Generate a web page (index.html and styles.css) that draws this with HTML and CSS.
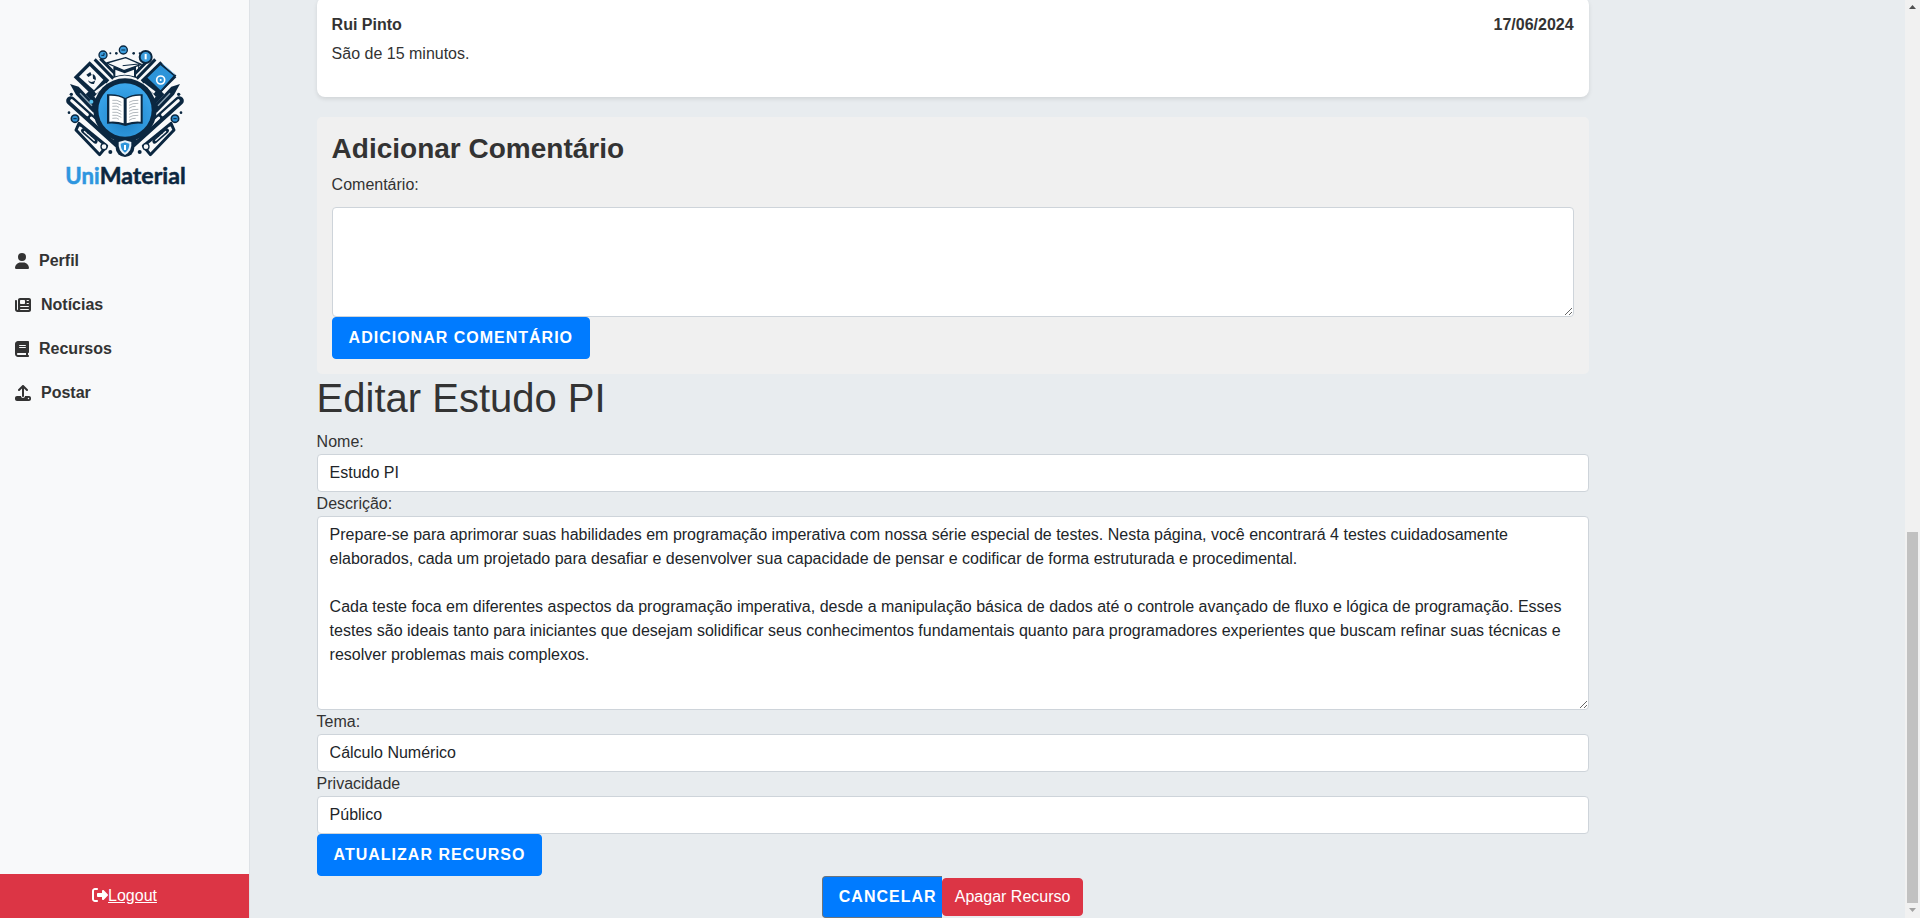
FILE: index.html
```html
<!DOCTYPE html>
<html lang="pt">
<head>
<meta charset="utf-8">
<title>UniMaterial</title>
<link rel="stylesheet" href="styles.css">
</head>
<body>
<aside class="sidebar">
  <svg class="logo" viewBox="0 0 450 495" role="img" aria-label="UniMaterial">
    <defs>
      <radialGradient id="disc" cx=".5" cy=".65" r=".6"><stop offset="0" stop-color="#1b7fc4"/><stop offset="1" stop-color="#3aa5ea"/></radialGradient>
      <g id="side">
        <!-- long pen, ruler and pencil that run down to the shield -->
        <path d="M112 188L152 232" stroke="#0b2740" stroke-width="14"/>
        <path d="M62 212L204 340" stroke="#0b2740" stroke-width="27" stroke-linecap="round"/>
        <path d="M65 212L112 254M124 264L190 324" stroke="#f8f9fa" stroke-width="9" stroke-linecap="round"/>
        <path d="M60 162l26 8 58 62-14 16-52-54z" fill="#0b2740"/>
        <path d="M90 190l36 37" stroke="#8fa5b5" stroke-width="4"/>
        <path d="M87 280L170 348L149 374L78 300z" fill="#f8f9fa" stroke="#0b2740" stroke-width="9" stroke-linejoin="round"/>
        <path d="M100 302l36 32" stroke="#0b2740" stroke-width="14" stroke-linecap="round"/>
        <path d="M102 304l32 28" stroke="#f8f9fa" stroke-width="4"/>
        <path d="M94 283l-5 7M106 292l-6 8M118 302l-6 8M130 312l-6 8M142 322l-6 8" stroke="#0b2740" stroke-width="4"/>
        <path d="M134 88l56 58M151 86l45 46" stroke="#0b2740" stroke-width="9"/>
        <path d="M119 94L178 151L132 201L71 142z" fill="#0b2740"/>
        <path d="M136 188l34-26" stroke="#f8f9fa" stroke-width="8"/>
        <circle cx="75" cy="266" r="11" fill="#2f8fd0" stroke="#0b2740" stroke-width="5"/>
        <path d="M70 266h10" stroke="#0b2740" stroke-width="3"/>
        <g fill="#0b2740"><circle cx="64" cy="193" r="5"/><circle cx="57" cy="248" r="4"/><circle cx="181" cy="366" r="6"/><circle cx="181" cy="70" r="3"/><circle cx="199" cy="70" r="4"/></g>
        <circle cx="162" cy="350" r="9" fill="#f8f9fa" stroke="#0b2740" stroke-width="4"/>
      </g>
    </defs>
    <g fill="none">
      <use href="#side"/>
      <use href="#side" transform="matrix(-1 0 0 1 450 0)"/>
    </g>
    <!-- left sheet -->
    <path d="M119 108L160 149L132 181L87 140z" fill="#f8f9fa"/>
    <path d="M109 134l12-8 4 9-10 6zM128 132q12 5 9 19l-8-5zM114 151q10 10 22 0l-4 11q-13 2-18-11z" fill="#0b2740"/>
    <circle cx="124" cy="215" r="6" fill="#58c1ee"/>
    <!-- right blue book -->
    <path d="M331 101l44 36-43 48-44-42z" fill="#2d94d9" stroke="#0b2740" stroke-width="6"/>
    <path d="M337 101l37 32" stroke="#8fc8ee" stroke-width="3"/>
    <circle cx="332" cy="150" r="12" fill="#2d94d9" stroke="#fff" stroke-width="5"/>
    <circle cx="332" cy="150" r="3" fill="#fff"/>
    <!-- centre disc -->
    <circle cx="225" cy="240" r="95" fill="#0b2740"/>
    <circle cx="225" cy="240" r="80" fill="url(#disc)"/>
    <path d="M171 193q34-3 55 11q22-14 52-11v88q-30-3-52 7q-23-10-55-7z" fill="#0b2740"/>
    <path d="M178 197q28-1 43 9v74q-18-7-43-5zM230 206q18-10 42-9v78q-22-2-42 5z" fill="#fff"/>
    <g fill="none" stroke="#8d969d" stroke-width="2"><path d="M187 211q14-3 27 6M187 220q14-3 27 6M187 229q14-3 20 3M187 238q14-3 27 6M187 247q14-3 27 6M187 256q14-3 27 6M187 265q14-3 20 3"/><path d="M237 217q10-7 28-6M237 226q10-7 28-6M237 235q10-7 20-6M237 244q10-7 28-6M237 253q10-7 28-6M237 262q10-7 28-6M237 271q10-7 20-6"/></g>
    <!-- graduation cap -->
    <path d="M190 110h68v34q-34-15-68 0z" fill="#0b2740"/>
    <path d="M196 119l28 11 28-11v20q-28-10-56 0z" fill="#f8f9fa"/>
    <path d="M170 99L227 83L274 103L222 122z" fill="#f8f9fa" stroke="#0b2740" stroke-width="4" stroke-linejoin="round"/>
    <path d="M218 107l48-5v22" fill="none" stroke="#0b2740" stroke-width="3"/>
    <!-- badges -->
    <g fill="#3b9ddd" stroke="#0b2740" stroke-width="4"><circle cx="159" cy="75" r="12"/><circle cx="220" cy="60" r="12"/><circle cx="287" cy="81" r="18" stroke-width="6"/></g>
    <path d="M154 76h8v-7M214 60h12" fill="none" stroke="#0b2740" stroke-width="3"/>
    <path d="M287 72v16" stroke="#fff" stroke-width="6"/>
    <!-- shield -->
    <circle cx="225" cy="353" r="28" fill="#0b2740"/>
    <path d="M206 336l19-5 19 5q3 27-19 39q-22-12-19-39z" fill="#e9f3fa"/>
    <path d="M212 341l13-4 13 4q1 17-13 27q-14-10-13-27z" fill="#3095da"/>
    <path d="M225 345v15" stroke="#fff" stroke-width="6"/>
    <text class="logo-text" y="461"><tspan x="46" fill="#2e96df" stroke="#2e96df" textLength="103" lengthAdjust="spacingAndGlyphs">Uni</tspan><tspan x="149" fill="#0b2740" stroke="#0b2740" textLength="258" lengthAdjust="spacingAndGlyphs">Material</tspan></text>
  </svg>
  <nav class="menu">
    <a class="menu-item"><svg class="icon icon-narrow" viewBox="0 0 448 512"><path d="M224 256A128 128 0 1 0 224 0a128 128 0 1 0 0 256zm-45.700 48C79.800 304 0 383.800 0 482.300C0 498.700 13.300 512 29.700 512H418.300c16.400 0 29.700-13.300 29.700-29.700C448 383.800 368.200 304 269.700 304H178.300z"/></svg>Perfil</a>
    <a class="menu-item"><svg class="icon" viewBox="0 0 512 512"><path d="M96 96c0-35.300 28.700-64 64-64H448c35.300 0 64 28.700 64 64V416c0 35.300-28.700 64-64 64H80c-44.200 0-80-35.800-80-80V128c0-17.700 14.300-32 32-32s32 14.300 32 32V400c0 8.800 7.200 16 16 16s16-7.200 16-16V96zm64 24v80c0 13.300 10.700 24 24 24H296c13.300 0 24-10.700 24-24V120c0-13.300-10.700-24-24-24H184c-13.300 0-24 10.700-24 24zm208-8c0 8.800 7.200 16 16 16h48c8.800 0 16-7.200 16-16s-7.200-16-16-16H384c-8.800 0-16 7.200-16 16zm0 96c0 8.800 7.200 16 16 16h48c8.800 0 16-7.200 16-16s-7.200-16-16-16H384c-8.800 0-16 7.200-16 16zM160 304c0 8.800 7.200 16 16 16H432c8.800 0 16-7.200 16-16s-7.200-16-16-16H176c-8.800 0-16 7.200-16 16zm0 96c0 8.800 7.200 16 16 16H432c8.800 0 16-7.200 16-16s-7.200-16-16-16H176c-8.800 0-16 7.200-16 16z"/></svg>Notícias</a>
    <a class="menu-item"><svg class="icon icon-narrow" viewBox="0 0 448 512"><path d="M96 0C43 0 0 43 0 96V416c0 53 43 96 96 96H384h32c17.700 0 32-14.300 32-32s-14.300-32-32-32V384c17.700 0 32-14.300 32-32V32c0-17.700-14.300-32-32-32H384 96zm0 384H352v64H96c-17.700 0-32-14.300-32-32s14.300-32 32-32zm32-240c0-8.800 7.200-16 16-16H336c8.800 0 16 7.200 16 16s-7.200 16-16 16H144c-8.800 0-16-7.200-16-16zm16 48H336c8.800 0 16 7.200 16 16s-7.200 16-16 16H144c-8.800 0-16-7.200-16-16s7.200-16 16-16z"/></svg>Recursos</a>
    <a class="menu-item"><svg class="icon" viewBox="0 0 512 512"><path d="M288 109.300V352c0 17.700-14.300 32-32 32s-32-14.300-32-32V109.300l-73.400 73.400c-12.500 12.500-32.800 12.500-45.300 0s-12.500-32.800 0-45.300l128-128c12.500-12.500 32.800-12.500 45.300 0l128 128c12.500 12.500 12.500 32.800 0 45.300s-32.800 12.500-45.300 0L288 109.300zM64 352H192c0 35.300 28.700 64 64 64s64-28.700 64-64H448c35.300 0 64 28.700 64 64v32c0 35.300-28.700 64-64 64H64c-35.300 0-64-28.700-64-64V416c0-35.300 28.700-64 64-64zM432 456a24 24 0 1 0 0-48 24 24 0 1 0 0 48z"/></svg>Postar</a>
  </nav>
  <div class="logout"><svg class="icon" viewBox="0 0 512 512"><path d="M377.900 105.900L500.700 228.700c7.200 7.200 11.300 17.100 11.300 27.300s-4.100 20.100-11.300 27.300L377.900 406.100c-6.400 6.400-15 9.900-24 9.900c-18.700 0-33.900-15.200-33.900-33.900l0-62.100-128 0c-17.700 0-32-14.300-32-32l0-64c0-17.700 14.300-32 32-32l128 0 0-62.100c0-18.700 15.200-33.900 33.900-33.900c9 0 17.600 3.600 24 9.900zM160 96L96 96c-17.700 0-32 14.300-32 32l0 256c0 17.700 14.300 32 32 32l64 0c17.700 0 32 14.300 32 32s-14.300 32-32 32l-64 0c-53 0-96-43-96-96L0 128C0 75 43 32 96 32l64 0c17.700 0 32 14.300 32 32s-14.300 32-32 32z"/></svg><a class="logout-link">Logout</a></div>
</aside>
<main class="content">
  <article class="comment">
    <header class="comment-head"><strong>Rui Pinto</strong><strong>17/06/2024</strong></header>
    <p class="comment-text">São de 15 minutos.</p>
  </article>
  <section class="add-comment">
    <h2 class="add-title">Adicionar Comentário</h2>
    <label class="add-label" for="comentario">Comentário:</label>
    <textarea class="field field-comment" id="comentario"></textarea>
    <button class="btn">Adicionar Comentário</button>
  </section>
  <h1 class="edit-title">Editar Estudo PI</h1>
  <form class="edit-form">
    <label for="nome">Nome:</label>
    <input class="field" id="nome" value="Estudo PI">
    <label for="descricao">Descrição:</label>
    <textarea class="field field-description" id="descricao">Prepare-se para aprimorar suas habilidades em programação imperativa com nossa série especial de testes. Nesta página, você encontrará 4 testes cuidadosamente elaborados, cada um projetado para desafiar e desenvolver sua capacidade de pensar e codificar de forma estruturada e procedimental.

Cada teste foca em diferentes aspectos da programação imperativa, desde a manipulação básica de dados até o controle avançado de fluxo e lógica de programação. Esses testes são ideais tanto para iniciantes que desejam solidificar seus conhecimentos fundamentais quanto para programadores experientes que buscam refinar suas técnicas e resolver problemas mais complexos.</textarea>
    <label for="tema">Tema:</label>
    <input class="field" id="tema" value="Cálculo Numérico">
    <label for="privacidade">Privacidade</label>
    <input class="field" id="privacidade" value="Público">
    <button class="btn" type="button">Atualizar Recurso</button>
  </form>
  <div class="actions"><button class="btn btn-cancel">Cancelar</button><button class="btn-delete">Apagar Recurso</button></div>
</main>
<div class="scrollbar">
  <svg class="arrow" viewBox="0 0 15 15"><path d="M4 9h7L7.500 5z" fill="#505050"/></svg>
  <div class="thumb"></div>
  <svg class="arrow" viewBox="0 0 15 15"><path d="M4 5h7L7.500 9z" fill="#a3a3a3"/></svg>
</div>
</body>
</html>
```
FILE: styles.css
```css
* { box-sizing: border-box; }
body {
  margin: 0;
  height: 918px;
  display: flex;
  overflow: hidden;
  background: #e8ecef;
  color: #333;
  font: 16px/24px "Liberation Sans", Arial, sans-serif;
}
h1, h2, p { margin: 0; }
.sidebar {
  width: 250px;
  flex: none;
  display: flex;
  flex-direction: column;
  background: #f8f9fa;
  border-right: 1px solid #dee2e6;
}
.logo { width: 150px; height: 165px; margin: 30px 0 0 50px; flex: none; }
.logo-text { font: 700 68px Lato, sans-serif; stroke-width: 1.5px; }
.menu { display: flex; flex-direction: column; gap: 20px; padding: 54px 15px 0; }
.menu-item { display: flex; gap: 10px; font-weight: 700; }
.icon { width: 16px; height: 16px; margin-top: 4px; fill: currentColor; flex: none; }
.icon-narrow { width: 14px; }
.logout {
  margin-top: auto;
  padding: 10px;
  display: flex;
  justify-content: center;
  background: #dc3545;
  color: #fff;
}
.logout .icon { margin-top: 3px; }
.logout-link { text-decoration: underline; }
.content { width: 1272px; margin: -3px 0 0 66.6px; flex: none; }
.comment {
  height: 100px;
  padding: 16px 15px 15px;
  margin-bottom: 20px;
  border-radius: 8px;
  background: #fff;
  box-shadow: 0 2px 4px rgba(0, 0, 0, .1);
}
.comment-head { display: flex; justify-content: space-between; margin-bottom: 5px; }
.add-comment { height: 257px; padding: 15px; border-radius: 5px; background: #f0f0f0; }
.add-title { font-size: 28px; line-height: 33.6px; margin-bottom: 7px; }
.add-label { display: block; height: 34.4px; }
.field {
  display: block;
  width: 100%;
  height: 38px;
  padding: 6px 12px;
  border: 1px solid #ced4da;
  border-radius: 4px;
  background: #fff;
  color: #212529;
  font: inherit;
}
.field-comment { height: 110px; }
.field-description { height: 194px; overflow: hidden; }
.btn {
  display: block;
  height: 42px;
  padding: 0 16px;
  border: 1px solid #007bff;
  border-radius: 4px;
  background: #007bff;
  color: #fff;
  font: 700 16px/24px "Liberation Sans", Arial, sans-serif;
  letter-spacing: 1px;
  text-transform: uppercase;
}
.edit-title { font-size: 40px; font-weight: 400; line-height: 48px; margin-bottom: 8px; }
.edit-form label { display: block; }
.actions { display: flex; justify-content: center; align-items: center; }
.btn-cancel {
  width: 120px;
  padding: 0 0 0 16px;
  border-color: #6c757d;
  border-right: 0;
  border-radius: 4px 0 0 4px;
  text-align: left;
}
.btn-delete {
  height: 38px;
  padding: 6px 12px;
  border: 1px solid #dc3545;
  border-radius: 4px;
  background: #dc3545;
  color: #fff;
  font: inherit;
}
.scrollbar {
  width: 15px;
  margin-left: auto;
  display: flex;
  flex-direction: column;
  justify-content: flex-end;
  background: #f1f1f1;
}
.arrow { width: 15px; height: 15px; flex: none; }
.thumb { width: 11px; height: 371px; margin: auto 0 0 2px; background: #c1c1c1; }
```
